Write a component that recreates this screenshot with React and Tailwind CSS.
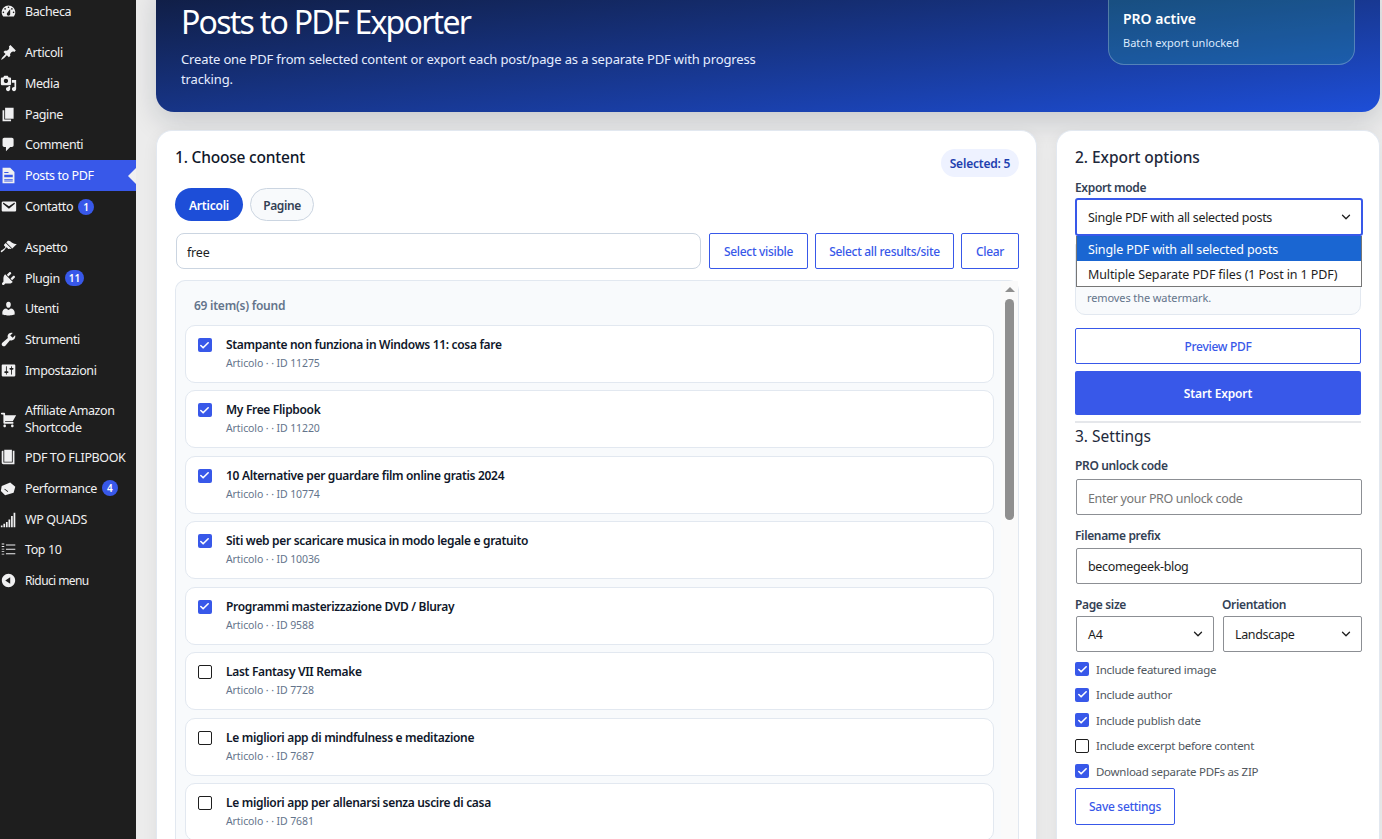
import { Check, ChevronDown } from "lucide-react";

const D = {
  dashboard: "M3.76 16h12.48c1.1-1.37 1.76-3.11 1.76-5 0-4.42-3.58-8-8-8s-8 3.58-8 8c0 1.89.66 3.63 1.76 5zM10 4c.55 0 1 .45 1 1s-.45 1-1 1-1-.45-1-1 .45-1 1-1zM6 6c.55 0 1 .45 1 1s-.45 1-1 1-1-.45-1-1 .45-1 1-1zm8 0c.55 0 1 .45 1 1s-.45 1-1 1-1-.45-1-1 .45-1 1-1zm-5.37 5.55L12 7v6c0 1.1-.9 2-2 2s-2-.9-2-2c0-.57.24-1.08.63-1.45zM4 10c.55 0 1 .45 1 1s-.45 1-1 1-1-.45-1-1 .45-1 1-1zm12 0c.55 0 1 .45 1 1s-.45 1-1 1-1-.45-1-1 .45-1 1-1z",
  pin: "M10.44 3.02l1.82-1.82 6.36 6.35-1.83 1.82c-1.05-.68-2.48-.57-3.41.36l-.75.75c-.92.93-1.04 2.35-.35 3.41l-1.83 1.82-2.41-2.41-2.8 2.79c-.42.42-3.38 2.71-3.8 2.29s1.86-3.39 2.28-3.81l2.79-2.79L4.1 9.36l1.83-1.82c1.05.69 2.48.57 3.4-.36l.75-.75c.93-.92 1.05-2.35.36-3.41z",
  media: "M13 11V4c0-.55-.45-1-1-1h-1.67L9 1H5L3.67 3H2c-.55 0-1 .45-1 1v7c0 .55.45 1 1 1h10c.55 0 1-.45 1-1zM7 4.5c1.38 0 2.5 1.12 2.5 2.5S8.38 9.5 7 9.5 4.5 8.38 4.5 7 5.62 4.5 7 4.5zM14 6h5v10.5c0 1.38-1.12 2.5-2.5 2.5S14 17.88 14 16.5s1.12-2.5 2.5-2.5c.17 0 .34.02.5.05V9h-3V6zm-4 8.05V13h2v3.5c0 1.38-1.12 2.5-2.5 2.5S7 17.88 7 16.5 8.12 14 9.5 14c.17 0 .34.02.5.05z",
  page: "M6 15V2h10v13H6zm-1 1h8v2H3V5h2v11z",
  comment: "M5 2h9c1.1 0 2 .9 2 2v7c0 1.1-.9 2-2 2h-2l-5 5v-5H5c-1.1 0-2-.9-2-2V4c0-1.1.9-2 2-2z",
  email: "M3.87 4h13.25C18.37 4 19 4.59 19 5.79v8.42c0 1.19-.63 1.79-1.88 1.79H3.87c-1.25 0-1.88-.6-1.88-1.79V5.79c0-1.2.63-1.79 1.88-1.79zm6.62 8.6l6.74-5.53c.24-.2.43-.66.13-1.07-.29-.41-.82-.42-1.17-.17l-5.7 3.86L4.8 5.83c-.35-.25-.88-.24-1.17.17-.3.41-.11.87.13 1.07z",
  brush: "M14.48 11.06L7.41 3.99l1.5-1.5c.5-.56 2.3-.47 3.51.32 1.21.8 1.43 1.28 2.91 2.1 1.18.64 2.45 1.26 4.45.85zm-.71.71L6.7 4.7 4.93 6.47c-.39.39-.39 1.02 0 1.41l1.06 1.06c.39.39.39 1.03 0 1.42-.6.6-1.43 1.11-2.21 1.69-.35.26-.7.53-1.01.84C1.43 13.23.4 14.4 1.2 15.2c.8.8 1.97-.23 3.31-1.57.31-.31.58-.66.84-1.01.58-.78 1.09-1.61 1.69-2.21.39-.39 1.03-.39 1.42 0l1.06 1.06c.39.39 1.02.39 1.41 0z",
  plug: "M13.11 4.36L9.87 7.6 8 5.73l3.24-3.24c.35-.34 1.05-.2 1.56.32.52.51.66 1.21.31 1.55zm-8 1.77l.91-1.12 9.01 9.01-1.19.84c-.71.71-2.63 1.16-3.82 1.16H6.14L4.9 17.26c-.59.59-1.54.59-2.12 0-.59-.58-.59-1.53 0-2.12l1.24-1.24v-3.88c0-1.13.4-3.19 1.09-3.89zm7.26 3.97l3.24-3.24c.34-.35 1.04-.21 1.55.31.52.51.66 1.21.31 1.55l-3.24 3.25z",
  user: "M10 9.25c-2.27 0-2.73-3.44-2.73-3.44C7 4.02 7.82 2 9.97 2c2.16 0 2.98 2.02 2.71 3.81 0 0-.41 3.44-2.68 3.44zm0 2.57L12.72 10c2.39 0 4.52 2.33 4.52 4.53v2.49s-3.65 1.13-7.24 1.13c-3.65 0-7.24-1.13-7.24-1.13v-2.49c0-2.25 1.94-4.48 4.47-4.48z",
  wrench: "M16.68 9.77c-1.34 1.34-3.3 1.67-4.95.99l-5.41 6.52c-.99.99-2.59.99-3.58 0s-.99-2.59 0-3.57l6.52-5.42c-.68-1.65-.35-3.61.99-4.95 1.28-1.28 3.12-1.62 4.72-1.06l-2.89 2.89 2.82 2.82 2.86-2.87c.53 1.58.18 3.39-1.08 4.65z",
  settings: "M18 16V4c0-.55-.45-1-1-1H3c-.55 0-1 .45-1 1v12c0 .55.45 1 1 1h14c.55 0 1-.45 1-1zM8 11h1c.55 0 1 .45 1 1s-.45 1-1 1H8v1.5c0 .28-.22.5-.5.5s-.5-.22-.5-.5V13H6c-.55 0-1-.45-1-1s.45-1 1-1h1V5.5c0-.28.22-.5.5-.5s.5.22.5.5V11zm5-2h-1c-.55 0-1-.45-1-1s.45-1 1-1h1V5.5c0-.28.22-.5.5-.5s.5.22.5.5V7h1c.55 0 1 .45 1 1s-.45 1-1 1h-1v5.5c0 .28-.22.5-.5.5s-.5-.22-.5-.5V9z",
  cart: "M6 13h9c.55 0 1 .45 1 1s-.45 1-1 1H5c-.55 0-1-.45-1-1V4H2c-.55 0-1-.45-1-1s.45-1 1-1h3c.55 0 1 .45 1 1v2h13l-4 7H6v1zm-.5 3c.83 0 1.5.67 1.5 1.5S6.33 19 5.5 19 4 18.33 4 17.5 4.67 16 5.5 16zm9 0c.83 0 1.5.67 1.5 1.5s-.67 1.5-1.5 1.5-1.5-.67-1.5-1.5.67-1.5 1.5-1.5z",
  book: "M16 2h1v16H4c-1.1 0-2-.9-2-2V3c0-.6.4-1 1-1h1v14h11V2h1zM5 1h9v14H5z",
  box: "M2 7l10-4 6 5-2 7-10 3-5-5zM5 11l4 3 .6-.8-4-3z",
  bars: "M1 17h2v2H1zM4 15h2v4H4zM7 13h2v6H7zM10 10h2v9h-2zM13 6h2v13h-2zM16 2h2v17h-2z",
  top: "M2 3h3v1H2zM2 6h3v1H2zM2 9h3v1H2zM2 12h3v1H2zM2 15h3v1H2zM7 4h11v1.2H7zM7 9h11v1.2H7zM7 14.500h11v1.2H7z",
  collapse: "M10 2.16c4.33 0 7.84 3.51 7.84 7.84s-3.51 7.84-7.84 7.84S2.16 14.33 2.16 10 5.710 2.160 10 2.160zm2 11.720V6.120L6.180 9.970z",
};

function MenuIcon({ name }) {
  return (
    <svg viewBox="0 0 20 20" className="w-[17px] h-[17px] shrink-0 fill-[#f0f0f1]">
      <path d={D[name]} />
    </svg>
  );
}

function PdfIcon() {
  return (
    <svg viewBox="0 0 20 20" className="w-[17px] h-[17px] shrink-0">
      <path d="M3 1h9l5 5v13H3z" fill="#f0f0f1" />
      <path d="M5 6h5v1H5zM5 9h10v3H5zM5 14h10v1H5zM5 16h10v1H5z" fill="#3858e9" />
    </svg>
  );
}

const menu = [
  { label: "Bacheca", icon: "dashboard", gap: true },
  { label: "Articoli", icon: "pin" },
  { label: "Media", icon: "media" },
  { label: "Pagine", icon: "page" },
  { label: "Commenti", icon: "comment" },
  { label: "Posts to PDF", active: true },
  { label: "Contatto", icon: "email", badge: "1", gap: true },
  { label: "Aspetto", icon: "brush" },
  { label: "Plugin", icon: "plug", badge: "11" },
  { label: "Utenti", icon: "user" },
  { label: "Strumenti", icon: "wrench" },
  { label: "Impostazioni", icon: "settings", gap: true },
  { label: "Affiliate Amazon Shortcode", icon: "cart", tall: true },
  { label: "PDF TO FLIPBOOK", icon: "book" },
  { label: "Performance", icon: "box", badge: "4" },
  { label: "WP QUADS", icon: "bars" },
  { label: "Top 10", icon: "top" },
  { label: "Riduci menu", icon: "collapse", small: true },
];

const items = [
  { title: "Stampante non funziona in Windows 11: cosa fare", id: 11275, on: true },
  { title: "My Free Flipbook", id: 11220, on: true },
  { title: "10 Alternative per guardare film online gratis 2024", id: 10774, on: true },
  { title: "Siti web per scaricare musica in modo legale e gratuito", id: 10036, on: true },
  { title: "Programmi masterizzazione DVD / Bluray", id: 9588, on: true },
  { title: "Last Fantasy VII Remake", id: 7728 },
  { title: "Le migliori app di mindfulness e meditazione", id: 7687 },
  { title: "Le migliori app per allenarsi senza uscire di casa", id: 7681 },
];

function Sidebar() {
  return (
    <aside className="w-[136px] shrink-0 bg-[#1e1e1e] text-[#f0f0f1]">
      <nav className="-mt-[3.6px] flex flex-col text-[12.5px] tracking-[-0.4px]">
        {menu.map((m) => (
          <div key={m.label} className={m.gap ? "mb-[10px]" : ""}>
            <div
              className={
                "relative flex items-center " +
                (m.tall ? "h-[46.2px] " : m.small ? "h-[30px] " : "h-[30.8px] ") +
                (m.active ? "bg-[#3858e9] text-white" : "")
              }
            >
              <span className="w-[25px] shrink-0 flex items-center">
                {m.active ? <PdfIcon /> : <MenuIcon name={m.icon} />}
              </span>
              <span className={"leading-[17px] " + (m.small ? "text-[12px] tracking-[-0.6px] " : "") + (m.tall ? "w-[100px]" : "")}>
                {m.label}
              </span>
              {m.badge && (
                <span className="ml-[5px] min-w-[16px] h-[16px] px-[4px] rounded-full bg-[#3858e9] text-white text-[10px] font-semibold leading-[16px] text-center tracking-normal">
                  {m.badge}
                </span>
              )}
              {m.active && (
                <span className="absolute right-0 top-1/2 -translate-y-1/2 border-y-[8px] border-y-transparent border-r-[8px] border-r-[#f0f0f1]" />
              )}
            </div>
          </div>
        ))}
      </nav>
    </aside>
  );
}

function Box({ on }) {
  return on ? (
    <span className="w-[14px] h-[14px] shrink-0 rounded-[2px] bg-[#3858e9] flex items-center justify-center">
      <Check className="w-[11px] h-[11px] text-white" strokeWidth={3.5} />
    </span>
  ) : (
    <span className="block w-[14px] h-[14px] shrink-0 rounded-[2px] border border-[#1e1e1e] bg-white" />
  );
}

function OutlineBtn({ className, children }) {
  return (
    <button className={"h-[36px] pt-px border border-[#3858e9] rounded-[2px] bg-white text-[#3858e9] text-[12px] tracking-[-0.3px] font-medium flex items-center justify-center " + className}>
      {children}
    </button>
  );
}

function Select({ value, className }) {
  return (
    <div className={"h-[36px] border border-[#8c8f94] rounded-[2px] pl-[11px] pr-[8px] bg-white flex items-center justify-between text-[12.5px] tracking-[-0.35px] text-[#1e1e1e] " + className}>
      <span className="pt-[2px]">{value}</span>
      <ChevronDown className="w-[14px] h-[14px]" strokeWidth={2.25} />
    </div>
  );
}

function Label({ className, children }) {
  return <div className={"h-[16px] pt-px leading-[16px] text-[12px] tracking-[-0.35px] font-semibold text-[#334155] " + className}>{children}</div>;
}

function Content() {
  return (
    <section className="w-[881px] h-[900px] shrink-0 bg-white rounded-t-[16px] border border-[#e2e8f0] border-b-0 pt-[15px] pl-[18px] pr-[17px] shadow-[0_4px_16px_rgba(15,23,42,0.06)]">
      <div className="flex justify-between items-start">
        <h2 className="text-[15.5px] leading-[22px] tracking-[-0.2px] font-medium text-[#0f172a]">1. Choose content</h2>
        <span className="mt-[3px] pt-px h-[28px] w-[78px] rounded-full bg-[#eef2ff] text-[#1e40af] text-[12px] tracking-[-0.2px] font-semibold flex items-center justify-center">Selected: 5</span>
      </div>
      <div className="mt-[11px] flex gap-[7px]">
        <span className="w-[68px] h-[33px] pt-[2px] rounded-full bg-[#1d4ed8] text-white text-[12px] tracking-[-0.2px] font-semibold flex items-center justify-center">Articoli</span>
        <span className="w-[64px] h-[33px] pt-[2px] rounded-full bg-[#f8fafc] border border-[#cbd5e1] text-[#334155] text-[12px] tracking-[-0.4px] font-semibold flex items-center justify-center">Pagine</span>
      </div>
      <div className="mt-[12px] flex gap-[7px]">
        <input
          readOnly
          value="free"
          className="ml-px w-[525px] h-[36px] pt-[2px] rounded-[8px] border border-[#cbd5e1] bg-white px-[10px] text-[12.5px] tracking-[-0.2px] text-[#1e1e1e] outline-none"
        />
        <OutlineBtn className="ml-px w-[99px]">Select visible</OutlineBtn>
        <OutlineBtn className="w-[139px]">Select all results/site</OutlineBtn>
        <OutlineBtn className="w-[58px]">Clear</OutlineBtn>
      </div>
      <div className="mt-[11px] flex rounded-t-[10px] border border-[#e2e8f0] border-b-0 bg-[#f8fafc] h-[600px]">
        <div className="flex-1 pl-[9px] pr-[7px] pt-[16px]">
          <div className="pl-[9px] pt-px h-[16px] leading-[16px] text-[12px] tracking-[-0.25px] font-semibold text-[#64748b]">69 item(s) found</div>
          <div className="mt-[12px] flex flex-col gap-[7.43px]">
            {items.map((it) => (
              <div key={it.id} className="h-[58px] rounded-[10px] border border-[#e2e8f0] bg-white flex items-start pl-[11.5px] pt-[12px]">
                <Box on={it.on} />
                <div className="ml-[14.5px]">
                  <div className="h-[14px] leading-[14px] text-[12px] tracking-[-0.32px] font-semibold text-[#0f172a]">{it.title}</div>
                  <div className="mt-[4px] h-[14px] leading-[14px] text-[10.5px] tracking-[-0.1px] text-[#64748b]">Articolo · · ID {it.id}</div>
                </div>
              </div>
            ))}
          </div>
        </div>
        <div className="w-[17px] shrink-0 bg-[#fafafa] flex flex-col items-center pt-[6px]">
          <span className="border-x-[5px] border-x-transparent border-b-[5px] border-b-[#8f8f8f]" />
          <span className="mt-[7px] w-[9px] h-[221px] rounded-full bg-[#8f8f8f]" />
        </div>
      </div>
    </section>
  );
}

function Options() {
  return (
    <section className="w-[324px] h-[900px] shrink-0 bg-white rounded-t-[16px] border border-[#e2e8f0] border-b-0 pt-[15px] pl-[18px] pr-[17px] shadow-[0_4px_16px_rgba(15,23,42,0.06)]">
      <h2 className="text-[15.5px] leading-[22px] tracking-[-0.05px] font-medium text-[#1e293b]">2. Export options</h2>
      <Label className="mt-[11px]">Export mode</Label>
      <div className="relative mt-[3px] w-[288px]">
        <div className="h-[38px] border-2 border-[#3858e9] rounded-[3px] pl-[11px] pr-[8px] flex items-center justify-between text-[12.5px] tracking-[-0.3px] text-[#1e1e1e]">
          <span className="pt-[2px]">Single PDF with all selected posts</span>
          <ChevronDown className="w-[14px] h-[14px]" strokeWidth={2.25} />
        </div>
        <div className="absolute z-10 left-px top-full w-[286px] border border-[#767676] border-t-0 bg-white text-[12.5px] tracking-[-0.12px] text-[#1e1e1e]">
          <div className="h-[25px] pt-[3px] pl-[11px] flex items-center bg-[#1a66d2] text-white">Single PDF with all selected posts</div>
          <div className="h-[25px] pt-[3px] pl-[11px] flex items-center">Multiple Separate PDF files (1 Post in 1 PDF)</div>
        </div>
      </div>
      <div className="mt-[8px] w-[286px] h-[71px] rounded-b-[10px] border border-[#e2e8f0] bg-[#f8fafc] flex items-end px-[11px] pb-[9px] text-[11px] tracking-[-0.1px] leading-[14px] text-[#64748b]">
        removes the watermark.
      </div>
      <OutlineBtn className="mt-[13px] w-[286px]">Preview PDF</OutlineBtn>
      <button className="mt-[7px] pt-px w-[286px] h-[44px] rounded-[2px] bg-[#3858e9] text-white text-[12px] tracking-[-0.15px] font-semibold">Start Export</button>
      <div className="mt-[6px] w-[286px] h-[2px] bg-[#e5e7eb]" />
      <h2 className="mt-[2px] text-[15.5px] leading-[22px] font-normal text-[#1e293b]">3. Settings</h2>
      <Label className="mt-[10px]">PRO unlock code</Label>
      <input
        readOnly
        placeholder="Enter your PRO unlock code"
        className="block mt-[6px] ml-px w-[286px] h-[36px] pt-[2px] rounded-[2px] border border-[#8c8f94] px-[11px] text-[12.5px] tracking-[-0.35px] outline-none placeholder:text-[#757575]"
      />
      <Label className="mt-[12px]">Filename prefix</Label>
      <input
        readOnly
        value="becomegeek-blog"
        className="block mt-[5px] ml-px w-[286px] h-[36px] rounded-[2px] border border-[#8c8f94] px-[11px] text-[12.5px] tracking-[-0.35px] text-[#1e1e1e] outline-none"
      />
      <div className="mt-[12px] flex">
        <div className="w-[147px]">
          <Label>Page size</Label>
          <Select value="A4" className="mt-[4px] ml-px w-[138px]" />
        </div>
        <div>
          <Label>Orientation</Label>
          <Select value="Landscape" className="mt-[4px] ml-px w-[139px]" />
        </div>
      </div>
      <div className="mt-[4.5px] flex flex-col">
        {[
          ["Include featured image", true],
          ["Include author", true],
          ["Include publish date", true],
          ["Include excerpt before content", false],
          ["Download separate PDFs as ZIP", true],
        ].map(([text, on]) => (
          <div key={text} className="h-[25.5px] flex items-center gap-[7px] text-[11.5px] tracking-[-0.27px] text-[#50575e]">
            <Box on={on} />
            {text}
          </div>
        ))}
      </div>
      <OutlineBtn className="mt-[4px] w-[100px] !h-[37px]">Save settings</OutlineBtn>
    </section>
  );
}

export default function App() {
  return (
    <div className="flex h-[839px] overflow-hidden bg-[#ececec] font-['Noto_Sans',sans-serif]">
      <Sidebar />
      <main className="flex-1 min-w-0 pl-[20px]">
        <header className="-mt-[20px] w-[1224px] h-[132px] rounded-[18px] bg-gradient-to-br from-[#0f1b3d] to-[#1d4ed8] pl-[25px] pr-[25px] pt-[22px] flex justify-between items-start text-white shadow-[0_10px_28px_rgba(15,23,42,0.16)]">
          <div>
            <h1 className="text-[32px] leading-[40px] tracking-[-1.75px] font-normal">Posts to PDF Exporter</h1>
            <p className="mt-[8px] w-[590px] text-[13px] leading-[19.5px] tracking-[-0.14px] text-[#e5edff]">
              Create one PDF from selected content or export each post/page as a separate PDF with progress tracking.
            </p>
          </div>
          <div className="-mt-[22px] w-[247px] h-[85px] rounded-[16px] bg-[rgba(34,197,130,0.2)] border border-white/25 pl-[14px] pb-[14px] flex flex-col justify-end">
            <div className="text-[14px] leading-[20px] font-semibold">PRO active</div>
            <div className="mt-[7px] text-[11px] leading-[14px] text-[#dbeafe]">Batch export unlocked</div>
          </div>
        </header>
        <div className="mt-[18px] flex gap-[19px]">
          <Content />
          <Options />
        </div>
      </main>
    </div>
  );
}
